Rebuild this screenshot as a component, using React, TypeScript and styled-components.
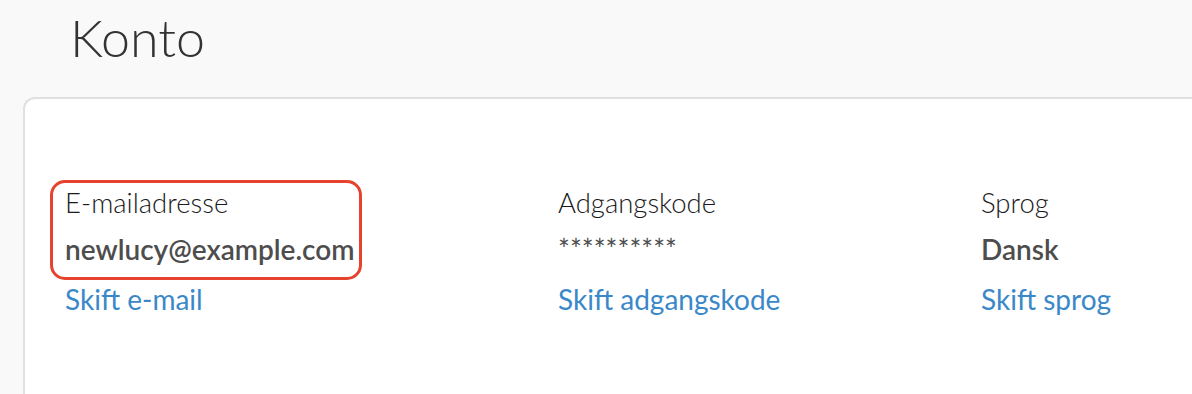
import React from "react";
import styled, { createGlobalStyle } from "styled-components";

const GlobalStyle = createGlobalStyle`
  html, body {
    margin: 0;
    padding: 0;
    background: #f9f9f9;
    font-family: Lato, "Open Sans", "Liberation Sans", sans-serif;
  }
  #root { min-height: 394px; overflow: hidden; }
`;

const Page = styled.div`
  width: 1192px;
  height: 394px;
  overflow: hidden;
  display: flex;
  flex-direction: column;
`;

const Title = styled.h1`
  margin: 5px 0 0 70px;
  font-size: 52px;
  font-weight: 300;
  line-height: 64px;
  color: #333;
`;

const Card = styled.section`
  margin: 28px -40px 0 23px;
  flex: 1;
  background: #fff;
  border: 2px solid #e0e0e0;
  border-right: none;
  border-bottom: none;
  border-radius: 12px 0 0 0;
  padding: 81px 0 0 40px;
`;

const Fields = styled.div`
  display: grid;
  grid-template-columns: 493px 423px 1fr;
  align-items: start;
`;

const Field = styled.div`
  display: flex;
  flex-direction: column;
  align-items: flex-start;
`;

const Highlight = styled.div`
  position: relative;
  display: flex;
  flex-direction: column;

  &::before {
    content: "";
    position: absolute;
    top: 0;
    bottom: -8px;
    left: -15px;
    right: -7px;
    border: 3px solid #e5432d;
    border-radius: 15px;
    pointer-events: none;
  }
`;

const Label = styled.div`
  font-size: 27.5px;
  font-weight: 300;
  line-height: 46px;
  color: #1a1a1a;
`;

const Value = styled.div<{ $masked?: boolean }>`
  font-size: 28px;
  font-weight: ${(p) => (p.$masked ? 400 : 600)};
  line-height: 46px;
  color: #4d4d4d;
`;

const Link = styled.a`
  margin-top: 4px;
  font-size: 28px;
  font-weight: 400;
  line-height: 46px;
  color: #3b88c9;
  text-decoration: none;
  cursor: pointer;
`;

export default function App() {
  return (
    <Page>
      <GlobalStyle />
      <Title>Konto</Title>
      <Card>
        <Fields>
          <Field>
            <Highlight>
              <Label>E-mailadresse</Label>
              <Value>newlucy@example.com</Value>
            </Highlight>
            <Link>Skift e-mail</Link>
          </Field>
          <Field>
            <Label>Adgangskode</Label>
            <Value $masked>**********</Value>
            <Link>Skift adgangskode</Link>
          </Field>
          <Field>
            <Label>Sprog</Label>
            <Value>Dansk</Value>
            <Link>Skift sprog</Link>
          </Field>
        </Fields>
      </Card>
    </Page>
  );
}
